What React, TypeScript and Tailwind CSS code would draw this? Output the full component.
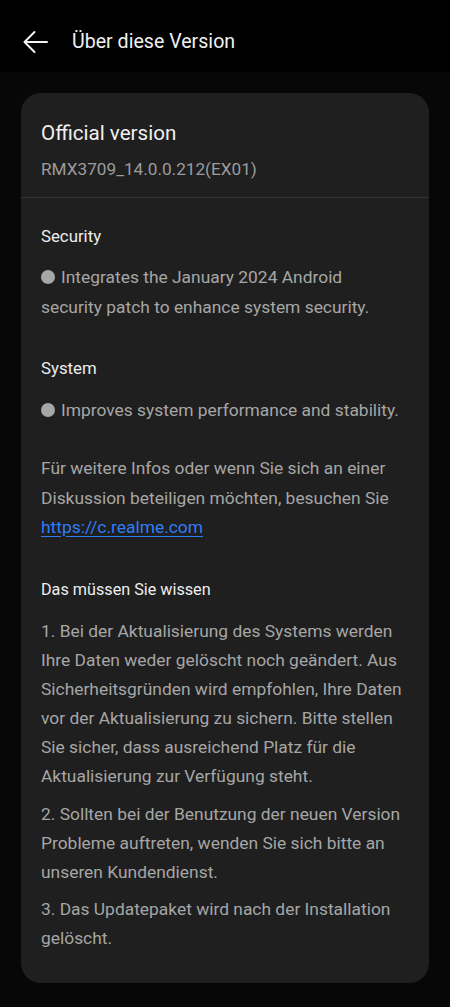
export default function App() {
  const font = { fontFamily: '"Roboto", "Noto Sans", sans-serif' };
  return (
    <div className="min-h-[1007px] w-[450px] bg-[#070707]" style={font}>
      {/* Header */}
      <div className="flex h-[72px] items-center bg-black pt-[11px]">
        <svg width="26" height="26" viewBox="0 0 26 26" className="ml-[22px]" fill="none">
          <path d="M25 13H2.5M12.5 3L2.5 13L12.5 23" stroke="#f2f2f2" strokeWidth="2" strokeLinecap="round" strokeLinejoin="round" />
        </svg>
        <h1 className="ml-[24px] text-[19.6px] leading-[28px] text-[#f0f0f0]">Über diese Version</h1>
      </div>

      {/* Card */}
      <div className="mx-[21px] mt-[21px] rounded-[20px] bg-[#1f1f1f] pb-[30px]">
        <div className="px-[20px] pt-[26px]">
          <div className="text-[20.6px] leading-[28px] text-[#f0f0f0]">Official version</div>
          <div className="mt-[10px] text-[17.2px] leading-[24px] text-[#9c9c9c]">RMX3709_14.0.0.212(EX01)</div>
        </div>
        <div className="mt-[16px] h-px bg-[#333333]" />

        <div className="px-[20px] text-[17.4px]">
          <div className="mt-[26px] text-[16.8px] leading-[24px] text-[#ededed]">Security</div>
          <p className="mt-[14px] leading-[30px] text-[#a6a6a6]">
            <span className="mr-[6px] inline-block h-[14px] w-[14px] rounded-full bg-[#a6a6a6] align-[-1px]" />
            Integrates the January 2024 Android<br />security patch to enhance system security.
          </p>

          <div className="mt-[34px] text-[16.8px] leading-[24px] text-[#ededed]">System</div>
          <p className="mt-[15px] leading-[30px] text-[#a6a6a6]">
            <span className="mr-[6px] inline-block h-[14px] w-[14px] rounded-full bg-[#a6a6a6] align-[-1px]" />
            Improves system performance and stability.
          </p>

          <p className="mt-[29px] leading-[29.5px] text-[#a6a6a6]">
            Für weitere Infos oder wenn Sie sich an einer Diskussion beteiligen möchten, besuchen Sie{" "}
            <a href="#" className="text-[#2f7df5] underline underline-offset-[3px]">https://c.realme.com</a>
          </p>

          <div className="mt-[35px] text-[16.2px] leading-[24px] text-[#ededed]">Das müssen Sie wissen</div>
          <p className="mt-[15px] leading-[29px] text-[#a6a6a6]">
            1. Bei der Aktualisierung des Systems werden Ihre Daten weder gelöscht noch geändert. Aus Sicherheitsgründen wird empfohlen, Ihre Daten vor der Aktualisierung zu sichern. Bitte stellen Sie sicher, dass ausreichend Platz für die Aktualisierung zur Verfügung steht.
          </p>
          <p className="mt-[9px] leading-[29px] text-[#a6a6a6]">
            2. Sollten bei der Benutzung der neuen Version Probleme auftreten, wenden Sie sich bitte an unseren Kundendienst.
          </p>
          <p className="mt-[8px] leading-[29px] text-[#a6a6a6]">
            3. Das Updatepaket wird nach der Installation gelöscht.
          </p>
        </div>
      </div>
    </div>
  );
}
